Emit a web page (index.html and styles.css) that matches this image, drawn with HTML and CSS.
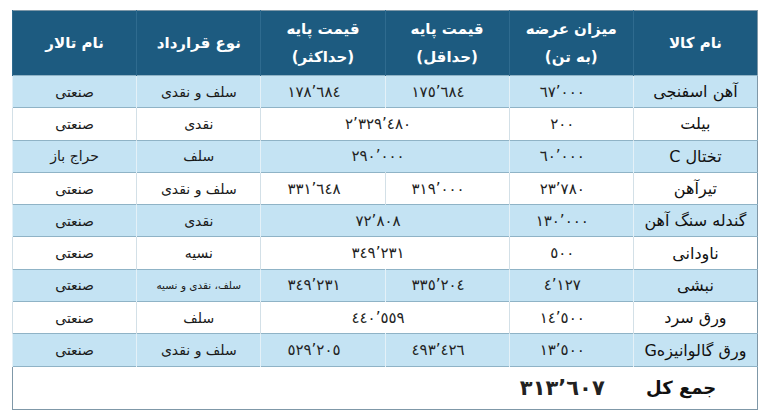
FILE: index.html
```html
<!DOCTYPE html>
<html lang="fa" dir="rtl">
<head>
<meta charset="utf-8">
<link rel="stylesheet" href="styles.css">
</head>
<body>
<table class="grid">
  <colgroup>
    <col class="c"><col class="c"><col class="c"><col class="c"><col class="c"><col class="c">
  </colgroup>
  <thead>
    <tr class="head">
      <th>نام کالا</th>
      <th>میزان عرضه<br>(به تن)</th>
      <th>قیمت پایه<br>(حداقل)</th>
      <th>قیمت پایه<br>(حداکثر)</th>
      <th>نوع قرارداد</th>
      <th>نام تالار</th>
    </tr>
  </thead>
  <tbody>
    <tr class="alt">
      <td class="name">آهن اسفنجی</td><td class="num"><bdo dir="ltr">٦٧’٠٠٠</bdo></td><td class="num"><bdo dir="ltr">١٧٥’٦٨٤</bdo></td><td class="num"><bdo dir="ltr">١٧٨’٦٨٤</bdo></td><td>سلف و نقدی</td><td>صنعتی</td>
    </tr>
    <tr>
      <td class="name">بیلت</td><td class="num"><bdo dir="ltr">٢٠٠</bdo></td><td class="num merged" colspan="2"><bdo dir="ltr">٢’٣٢٩’٤٨٠</bdo></td><td>نقدی</td><td>صنعتی</td>
    </tr>
    <tr class="alt">
      <td class="name">تختال C</td><td class="num"><bdo dir="ltr">٦٠’٠٠٠</bdo></td><td class="num merged" colspan="2"><bdo dir="ltr">٢٩٠’٠٠٠</bdo></td><td>سلف</td><td>حراج باز</td>
    </tr>
    <tr>
      <td class="name">تیرآهن</td><td class="num"><bdo dir="ltr">٢٣’٧٨٠</bdo></td><td class="num"><bdo dir="ltr">٣١٩’٠٠٠</bdo></td><td class="num"><bdo dir="ltr">٣٣١’٦٤٨</bdo></td><td>سلف و نقدی</td><td>صنعتی</td>
    </tr>
    <tr class="alt">
      <td class="name">گندله سنگ آهن</td><td class="num"><bdo dir="ltr">١٣٠’٠٠٠</bdo></td><td class="num merged" colspan="2"><bdo dir="ltr">٧٢’٨٠٨</bdo></td><td>نقدی</td><td>صنعتی</td>
    </tr>
    <tr>
      <td class="name">ناودانی</td><td class="num"><bdo dir="ltr">٥٠٠</bdo></td><td class="num merged" colspan="2"><bdo dir="ltr">٣٤٩’٢٣١</bdo></td><td>نسیه</td><td>صنعتی</td>
    </tr>
    <tr class="alt">
      <td class="name">نبشی</td><td class="num"><bdo dir="ltr">٤’١٢٧</bdo></td><td class="num"><bdo dir="ltr">٣٣٥’٢٠٤</bdo></td><td class="num"><bdo dir="ltr">٣٤٩’٢٣١</bdo></td><td class="small">سلف، نقدی و نسیه</td><td>صنعتی</td>
    </tr>
    <tr>
      <td class="name">ورق سرد</td><td class="num"><bdo dir="ltr">١٤’٥٠٠</bdo></td><td class="num merged" colspan="2"><bdo dir="ltr">٤٤٠’٥٥٩</bdo></td><td>سلف</td><td>صنعتی</td>
    </tr>
    <tr class="alt">
      <td class="name">ورق گالوانیزهG</td><td class="num"><bdo dir="ltr">١٣’٥٠٠</bdo></td><td class="num"><bdo dir="ltr">٤٩٣’٤٢٦</bdo></td><td class="num"><bdo dir="ltr">٥٢٩’٢٠٥</bdo></td><td>سلف و نقدی</td><td>صنعتی</td>
    </tr>
    <tr class="total">
      <td class="name">جمع کل</td><td class="num"><bdo dir="ltr">٣١٣’٦٠٧</bdo></td><td></td><td></td><td></td><td></td>
    </tr>
  </tbody>
</table>
</body>
</html>
```

FILE: styles.css
```css
html, body {
  margin: 0;
  padding: 0;
  background: #ffffff;
}
body {
  padding: 10px 14px 0 12px;
  font-family: "DejaVu Sans", sans-serif;
  color: #1a1a1a;
}
.grid {
  width: 746px;
  border-collapse: collapse;
  table-layout: fixed;
  border: 1px solid #7f98a8;
}
.c { width: 124px; }
.head th {
  height: 64px;
  padding: 0;
  background: #1d5b80;
  color: #ffffff;
  font-size: 15px;
  font-weight: bold;
  line-height: 28px;
  text-align: center;
  border-left: 1px solid #2f6b8f;
}
td {
  height: 31.3px;
  padding: 0;
  text-align: center;
  font-size: 14px;
  border-top: 1px solid #8fb3c6;
  border-left: 1px solid #d3e0e7;
}
tr.alt td {
  background: #c4e3f3;
  border-left-color: #e4f1f8;
}
td.name {
  font-size: 16px;
  color: #111111;
}
td.num {
  font-size: 15px;
  padding-right: 18px;
  color: #222222;
}
td.merged {
  padding-right: 14px;
}
td.small {
  font-size: 10.5px;
}
tr.total td {
  height: 42px;
  background: #ffffff;
  border-left: none;
  border-top: 1px solid #8fb3c6;
}
tr.total td.name {
  font-size: 18px;
  font-weight: bold;
  padding-right: 28px;
}
tr.total td.num {
  font-size: 21px;
  font-weight: bold;
}
```
